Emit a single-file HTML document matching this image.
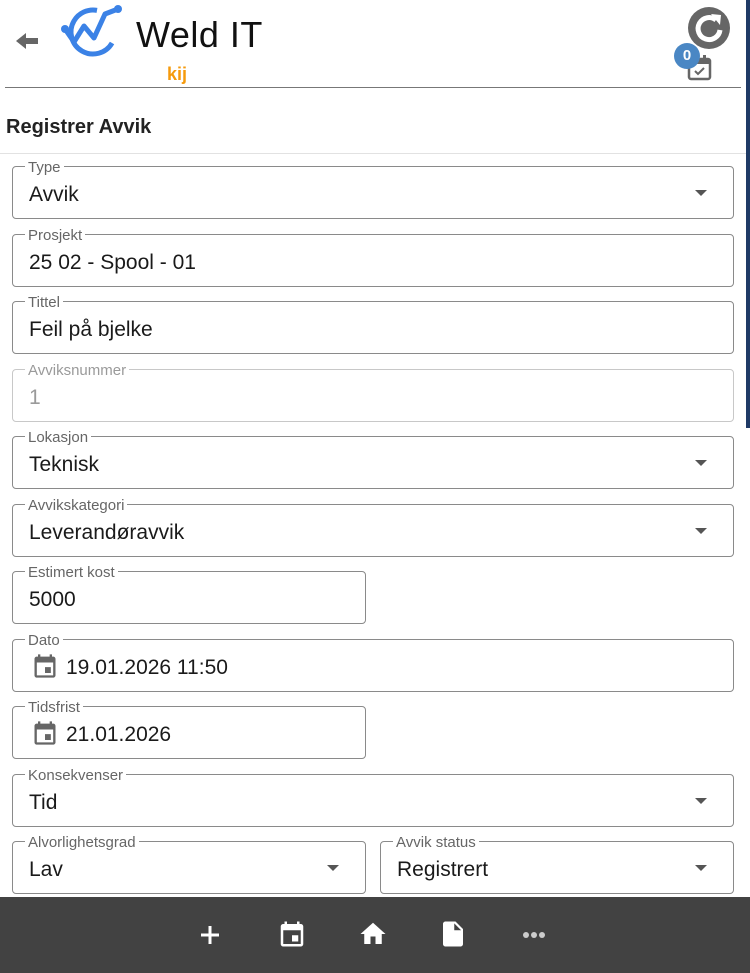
<!DOCTYPE html>
<html><head><meta charset="utf-8"><style>
*{box-sizing:border-box;margin:0;padding:0}
body{width:750px;height:973px;overflow:hidden;background:#fff;font-family:"Liberation Sans",Roboto,sans-serif;position:relative;color:#222}
.f{position:absolute;height:53px;border:1px solid #8a8a8a;border-radius:4px}
.f .l{position:absolute;top:-7px;left:12px;background:#fff;padding:0 3px;font-size:15px;color:#666;line-height:16px}
.f .v{position:absolute;left:16px;top:16px;font-size:21px;color:#1a1a1a}
.f.d{border-color:#c8c8c8}.f.d .l,.f.d .v{color:#9a9a9a}
.ar{position:absolute;right:26px;top:23px;width:0;height:0;border-left:6px solid transparent;border-right:6px solid transparent;border-top:6px solid #555}
.cal{position:absolute;left:18px;top:12px}
.f .v.c{left:53px}
</style></head><body>
<svg style="position:absolute;left:16px;top:31px" width="22" height="20" viewBox="0 0 22 20"><path d="M0 10 L10 2 L10 7 L22 7 L22 13 L10 13 L10 18 Z" fill="#666"/></svg>
<svg style="position:absolute;left:60px;top:4px" width="66" height="56" viewBox="0 0 66 56">
<circle cx="33" cy="28" r="22" fill="none" stroke="#3b82e6" stroke-width="5" stroke-dasharray="96 42" transform="rotate(30 33 28)"/>
<path d="M5 25 L14 38 L24 22 L34 34 L45 10 L58 5" fill="none" stroke="#3b82e6" stroke-width="5" stroke-linecap="round" stroke-linejoin="round"/>
<circle cx="5" cy="25" r="4" fill="#3b82e6"/><circle cx="58" cy="5" r="4" fill="#3b82e6"/>
</svg>
<div style="position:absolute;left:136px;top:14px;font-size:36px;color:#111;letter-spacing:0.5px">Weld IT</div>
<div style="position:absolute;left:167px;top:64px;font-size:18px;font-weight:bold;color:#f59a0c">kij</div>
<svg style="position:absolute;left:687px;top:6px" width="44" height="44" viewBox="0 0 44 44"><circle cx="22" cy="22" r="21" fill="#666"/><path d="M29 14 A11 11 0 1 0 33 24" fill="none" stroke="#fff" stroke-width="5"/><path d="M24 8 L34 9 L33 19 Z" fill="#fff"/></svg>
<svg style="position:absolute;left:687px;top:54px" width="26" height="27" viewBox="0 0 26 27"><rect x="2" y="5" width="21" height="20" rx="2" fill="none" stroke="#666" stroke-width="2.5"/><rect x="2" y="5" width="21" height="5" fill="#666"/><rect x="6" y="1" width="3" height="6" fill="#666"/><rect x="16" y="1" width="3" height="6" fill="#666"/><path d="M8 17 L11 20 L17 14" fill="none" stroke="#666" stroke-width="2"/></svg>
<div style="position:absolute;left:674px;top:43px;width:26px;height:26px;border-radius:50%;background:#4a87c4;color:#fff;font-weight:bold;font-size:15px;text-align:center;line-height:26px">0</div>
<div style="position:absolute;left:746px;top:0;width:4px;height:428px;background:#1f3a66"></div>
<div style="position:absolute;left:5px;top:87px;width:736px;height:1px;background:#777"></div>
<div style="position:absolute;left:6px;top:116px;font-size:20px;font-weight:bold;color:#222">Registrer Avvik</div>
<div style="position:absolute;left:0;top:153px;width:746px;height:1px;background:#e2e2e2"></div>

<div class="f" style="left:12px;top:166px;width:722px"><span class="l">Type</span><span class="v">Avvik</span><i class="ar"></i></div>
<div class="f" style="left:12px;top:234px;width:722px"><span class="l">Prosjekt</span><span class="v">25 02 - Spool - 01</span></div>
<div class="f" style="left:12px;top:301px;width:722px"><span class="l">Tittel</span><span class="v">Feil på bjelke</span></div>
<div class="f d" style="left:12px;top:369px;width:722px"><span class="l">Avviksnummer</span><span class="v">1</span></div>
<div class="f" style="left:12px;top:436px;width:722px"><span class="l">Lokasjon</span><span class="v">Teknisk</span><i class="ar"></i></div>
<div class="f" style="left:12px;top:504px;width:722px"><span class="l">Avvikskategori</span><span class="v">Leverandøravvik</span><i class="ar"></i></div>
<div class="f" style="left:12px;top:571px;width:354px"><span class="l">Estimert kost</span><span class="v">5000</span></div>
<div class="f" style="left:12px;top:639px;width:722px"><span class="l">Dato</span><svg class="cal" width="28" height="28" viewBox="0 0 24 24"><path fill="#666" d="M19 4h-1V2h-2v2H8V2H6v2H5c-1.1 0-2 .9-2 2v14c0 1.1.9 2 2 2h14c1.1 0 2-.9 2-2V6c0-1.1-.9-2-2-2zm0 16H5V9h14v11zM12 13h5v5h-5z"/></svg><span class="v c">19.01.2026 11:50</span></div>
<div class="f" style="left:12px;top:706px;width:354px"><span class="l">Tidsfrist</span><svg class="cal" width="28" height="28" viewBox="0 0 24 24"><path fill="#666" d="M19 4h-1V2h-2v2H8V2H6v2H5c-1.1 0-2 .9-2 2v14c0 1.1.9 2 2 2h14c1.1 0 2-.9 2-2V6c0-1.1-.9-2-2-2zm0 16H5V9h14v11zM12 13h5v5h-5z"/></svg><span class="v c">21.01.2026</span></div>
<div class="f" style="left:12px;top:774px;width:722px"><span class="l">Konsekvenser</span><span class="v">Tid</span><i class="ar"></i></div>
<div class="f" style="left:12px;top:841px;width:354px"><span class="l">Alvorlighetsgrad</span><span class="v">Lav</span><i class="ar"></i></div>
<div class="f" style="left:380px;top:841px;width:354px"><span class="l">Avvik status</span><span class="v">Registrert</span><i class="ar"></i></div>

<div style="position:absolute;left:0;top:897px;width:750px;height:76px;background:#424242">
<svg style="position:absolute;left:199px;top:27px" width="22" height="22" viewBox="0 0 22 22"><path d="M11 2v18M2 11h18" stroke="#fff" stroke-width="3"/></svg>
<svg style="position:absolute;left:277px;top:22px" width="30" height="30" viewBox="0 0 24 24"><path fill="#fff" d="M19 4h-1V2h-2v2H8V2H6v2H5c-1.1 0-2 .9-2 2v14c0 1.1.9 2 2 2h14c1.1 0 2-.9 2-2V6c0-1.1-.9-2-2-2zm0 16H5V9h14v11zM12 13h5v5h-5z"/></svg>
<svg style="position:absolute;left:358px;top:22px" width="30" height="30" viewBox="0 0 24 24"><path fill="#fff" d="M10 20v-6h4v6h5v-8h3L12 3 2 12h3v8z"/></svg>
<svg style="position:absolute;left:438px;top:22px" width="30" height="30" viewBox="0 0 24 24"><path fill="#fff" d="M6 2c-1.1 0-2 .9-2 2v16c0 1.1.9 2 2 2h12c1.1 0 2-.9 2-2V8l-6-6H6zm7 7V3.5L18.5 9H13z"/></svg>
<svg style="position:absolute;left:522px;top:33px" width="26" height="10" viewBox="0 0 26 10"><circle cx="4" cy="5" r="3" fill="#ccc"/><circle cx="12" cy="5" r="3" fill="#ccc"/><circle cx="20" cy="5" r="3" fill="#ccc"/></svg>
</div>
</body></html>
